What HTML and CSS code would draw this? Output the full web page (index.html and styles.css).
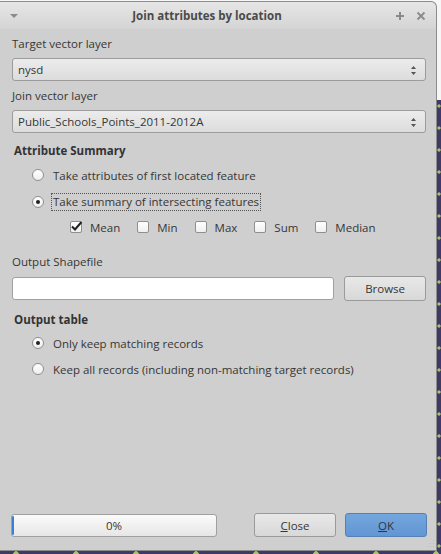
FILE: index.html
```html
<!DOCTYPE html>
<html>
<head>
<meta charset="utf-8">
<link rel="stylesheet" href="styles.css">
</head>
<body>
<div class="dialog">
  <div class="titlebar">
    <svg class="tb-menu" width="10" height="6" viewBox="0 0 10 6"><path d="M1 1 L9 1 L5 5 Z" fill="#8a8a8a"/></svg>
    <span class="title">Join attributes by location</span>
    <div class="tb-ctl">
      <svg width="10" height="10" viewBox="0 0 10 10"><path d="M5 1 V9 M1 5 H9" stroke="#8a8a8a" stroke-width="2"/></svg>
      <svg width="10" height="10" viewBox="0 0 10 10"><path d="M1.5 1.5 L8.5 8.5 M8.5 1.5 L1.5 8.5" stroke="#8a8a8a" stroke-width="1.8"/></svg>
    </div>
  </div>
  <div class="content">
    <div class="lbl l1">Target vector layer</div>
    <div class="combo">
      <span>nysd</span>
      <svg class="arrows" width="7" height="11" viewBox="0 0 7 11"><path d="M3.5 1 L6 4 L1 4 Z M1 7 L6 7 L3.5 10 Z" fill="#555"/></svg>
    </div>
    <div class="lbl l2">Join vector layer</div>
    <div class="combo">
      <span>Public_Schools_Points_2011-2012A</span>
      <svg class="arrows" width="7" height="11" viewBox="0 0 7 11"><path d="M3.5 1 L6 4 L1 4 Z M1 7 L6 7 L3.5 10 Z" fill="#555"/></svg>
    </div>
    <div class="group-title g1">Attribute Summary</div>
    <div class="radio-row r1"><span class="radio"></span><span>Take attributes of first located feature</span></div>
    <div class="radio-row r2"><span class="radio on"></span><span class="focus">Take summary of intersecting features</span></div>
    <div class="checks">
      <div class="check-item"><span class="check on"><svg width="13" height="11" viewBox="0 0 13 11"><path d="M2 5.5 L5 8.5 L11.5 1" fill="none" stroke="#222" stroke-width="2"/></svg></span><span>Mean</span></div>
      <div class="check-item"><span class="check"></span><span>Min</span></div>
      <div class="check-item"><span class="check"></span><span>Max</span></div>
      <div class="check-item"><span class="check"></span><span>Sum</span></div>
      <div class="check-item"><span class="check"></span><span>Median</span></div>
    </div>
    <div class="lbl l3">Output Shapefile</div>
    <div class="file-row">
      <div class="input"></div>
      <div class="btn browse">Browse</div>
    </div>
    <div class="group-title g2">Output table</div>
    <div class="radio-row r3"><span class="radio on"></span><span>Only keep matching records</span></div>
    <div class="radio-row r4"><span class="radio"></span><span>Keep all records (including non-matching target records)</span></div>
  </div>
  <div class="footer">
    <div class="progress"><span class="pbar"></span><span>0%</span></div>
    <div class="btn close"><u>C</u>lose</div>
    <div class="btn ok"><u>O</u>K</div>
    <svg class="grip" width="8" height="8" viewBox="0 0 8 8"><g fill="#bdbdbd"><rect x="6" y="0" width="1" height="1"/><rect x="3" y="3" width="1" height="1"/><rect x="6" y="3" width="1" height="1"/><rect x="0" y="6" width="1" height="1"/><rect x="3" y="6" width="1" height="1"/><rect x="6" y="6" width="1" height="1"/></g></svg>
  </div>
</div>
</body>
</html>
```
FILE: styles.css
```css
html, body {
  margin: 0;
  padding: 0;
}
body {
  width: 441px;
  height: 554px;
  overflow: hidden;
  position: relative;
  background:
    radial-gradient(circle at 4px 3px, #a8c46a 2.5px, transparent 3px) 12px 551px / 60px 6px repeat-x,
    linear-gradient(to bottom, #f6f6f6 0, #f6f6f6 100px, #3d3a68 100px, #3d3a68 100%);
  font-family: "Open Sans", "Noto Sans", sans-serif;
  font-size: 11.5px;
  color: #363636;
}
body::after {
  content: "";
  position: absolute;
  left: 437px;
  top: 104px;
  width: 4px;
  height: 447px;
  background: radial-gradient(circle at 2px 2px, #a8c46a 1.4px, transparent 1.8px) 0 0 / 4px 22px repeat-y;
}
.dialog {
  box-sizing: border-box;
  width: 437px;
  height: 550px;
  margin-top: 1px;
  background: #cfcfcf;
  border: 1px solid #8c8c8c;
  border-left: none;
  border-top-right-radius: 6px;
  display: flex;
  flex-direction: column;
  position: relative;
}
.titlebar {
  height: 27px;
  display: flex;
  align-items: center;
  padding: 0 10px 0 9px;
  background: linear-gradient(to bottom, #e6e6e6, #d4d4d4);
  border-top-right-radius: 6px;
}
.tb-menu { margin-top: 1px; }
.title {
  flex: 1;
  text-align: center;
  font-weight: bold;
  font-size: 11.5px;
  color: #4a4a4a;
}
.tb-ctl {
  display: flex;
  gap: 11px;
  align-items: center;
}
.content {
  padding: 0 10px 0 12px;
  flex: 1;
}
.lbl {
  line-height: 16px;
  height: 16px;
}
.l1 { margin-top: 7px; }
.l2 { margin-top: 7px; }
.l3 { margin-top: 19px; }
.combo {
  box-sizing: border-box;
  height: 23px;
  margin-top: 6px;
  width: 414px;
  border: 1px solid #9c9c9c;
  border-radius: 3px;
  background: linear-gradient(to bottom, #ececec, #dcdcdc);
  display: flex;
  align-items: center;
  padding: 0 8px 0 5px;
  justify-content: space-between;
}
.arrows { margin-top: 1px; }
.group-title {
  font-weight: bold;
  line-height: 16px;
  height: 16px;
  padding-left: 2px;
  color: #333;
}
.g1 { margin-top: 10px; }
.g2 { margin-top: 11px; }
.radio-row {
  display: flex;
  align-items: center;
  height: 18px;
  padding-left: 20px;
  gap: 9px;
}
.r1 { margin-top: 7px; }
.r2 { margin-top: 9px; }
.r3 { margin-top: 6px; }
.r4 { margin-top: 8px; }
.radio {
  box-sizing: border-box;
  width: 12px;
  height: 12px;
  border-radius: 50%;
  border: 1px solid #8f8f8f;
  background: linear-gradient(to bottom, #ffffff, #eeeeee);
  display: flex;
  align-items: center;
  justify-content: center;
  flex: none;
}
.radio.on::after {
  content: "";
  width: 4px;
  height: 4px;
  border-radius: 50%;
  background: #222;
}
.focus {
  outline: 1px dotted #555;
  outline-offset: 0;
  padding: 0 1px;
  margin-left: -1px;
  line-height: 16px;
}
.checks {
  display: flex;
  align-items: center;
  margin-top: 8px;
  padding-left: 58px;
  height: 16px;
}
.check-item {
  display: flex;
  align-items: center;
  gap: 8px;
  margin-right: 17px;
}
.check {
  box-sizing: border-box;
  width: 12px;
  height: 12px;
  border: 1px solid #8f8f8f;
  border-radius: 2px;
  background: linear-gradient(to bottom, #ffffff, #efefef);
  position: relative;
  flex: none;
}
.check svg {
  position: absolute;
  left: -1px;
  top: -1px;
}
.file-row {
  display: flex;
  align-items: center;
  gap: 10px;
  margin-top: 6px;
  width: 414px;
}
.input {
  box-sizing: border-box;
  width: 323px;
  height: 23px;
  background: #fff;
  border: 1px solid #a0a0a0;
  border-radius: 3px;
}
.btn {
  box-sizing: border-box;
  height: 25px;
  width: 82px;
  border: 1px solid #9a9a9a;
  border-radius: 3px;
  background: linear-gradient(to bottom, #e8e8e8, #d8d8d8);
  display: flex;
  align-items: center;
  justify-content: center;
  color: #363636;
}
.footer {
  height: 38px;
  display: flex;
  align-items: flex-start;
  padding-left: 11px;
  position: relative;
}
.progress {
  box-sizing: border-box;
  width: 206px;
  height: 23px;
  margin-top: 2px;
  border: 1px solid #a0a0a0;
  border-radius: 3px;
  background: linear-gradient(to bottom, #fbfbfb, #e6e6e6);
  display: flex;
  align-items: center;
  justify-content: center;
  position: relative;
}
.pbar {
  position: absolute;
  left: 0;
  top: 1px;
  bottom: 1px;
  width: 2px;
  background: #3b7fd0;
  border-radius: 1px;
}
.close {
  margin-left: 37px;
  margin-top: 1px;
  width: 82px;
  height: 24px;
}
.ok {
  margin-left: 9px;
  margin-top: 1px;
  width: 82px;
  height: 24px;
  background: linear-gradient(to bottom, #74a6de, #6296d3);
  border-color: #5580b5;
  color: #2e3440;
}
.grip {
  position: absolute;
  right: 1px;
  bottom: 2px;
}
```
